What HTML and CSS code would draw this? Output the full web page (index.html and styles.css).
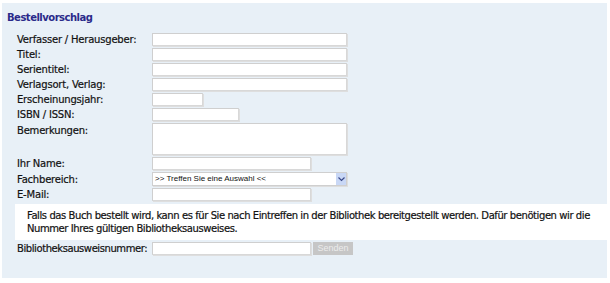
FILE: index.html
```html
<!DOCTYPE html>
<html lang="de">
<head>
<meta charset="utf-8">
<title>Bestellvorschlag</title>
<link rel="stylesheet" href="styles.css">
</head>
<body>
<div class="panel">
  <h1 class="title">Bestellvorschlag</h1>
  <form class="form">
    <div class="grid">
      <label class="lbl">Verfasser / Herausgeber:</label><input class="inp w-full" type="text">
      <label class="lbl">Titel:</label><input class="inp w-full" type="text">
      <label class="lbl">Serientitel:</label><input class="inp w-full" type="text">
      <label class="lbl">Verlagsort, Verlag:</label><input class="inp w-full" type="text">
      <label class="lbl">Erscheinungsjahr:</label><input class="inp w-year" type="text">
      <label class="lbl">ISBN / ISSN:</label><input class="inp w-isbn" type="text">
      <label class="lbl lbl-top">Bemerkungen:</label><textarea class="inp w-full area"></textarea>
      <label class="lbl">Ihr Name:</label><input class="inp w-mid" type="text">
      <label class="lbl">Fachbereich:</label>
      <div class="select w-full"><span class="select-text">&gt;&gt; Treffen Sie eine Auswahl &lt;&lt;</span><span class="select-btn"><svg width="7" height="5" viewBox="0 0 7 5"><path d="M0.5 0.5 L3.5 3.5 L6.5 0.5" fill="none" stroke="#3a4a8a" stroke-width="1.2"/></svg></span></div>
      <label class="lbl">E-Mail:</label><input class="inp w-mid" type="text">
    </div>
    <div class="note">Falls das Buch bestellt wird, kann es für Sie nach Eintreffen in der Bibliothek bereitgestellt werden. Dafür benötigen wir die Nummer Ihres gültigen Bibliotheksausweises.</div>
    <div class="grid">
      <label class="lbl lbl-tight">Bibliotheksausweisnummer:</label>
      <div class="row"><input class="inp w-mid" type="text"><button class="btn" type="button">Senden</button></div>
    </div>
  </form>
</div>
</body>
</html>
```
FILE: styles.css
```css
html, body {
  margin: 0;
  padding: 0;
  background: #ffffff;
}
body {
  font-family: "DejaVu Sans", Verdana, sans-serif;
  font-size: 10px;
  color: #111111;
}
.panel {
  margin: 3px 3px 0 2px;
  width: 605px;
  height: 275px;
  background: #e8f0f7;
  box-sizing: border-box;
  padding-top: 8px;
}
.title {
  margin: 0 0 0 5px;
  font-size: 10px;
  font-weight: bold;
  letter-spacing: -0.5px;
  line-height: 13px;
  color: #2a2a8a;
  height: 22px;
}
.form {
  margin: 0;
}
.grid {
  display: grid;
  grid-template-columns: 135px auto;
  row-gap: 2px;
  align-items: center;
  padding-left: 15px;
}
.lbl {
  line-height: 13px;
  white-space: nowrap;
  letter-spacing: -0.2px;
  -webkit-text-stroke: 0.2px #111;
}
.lbl-tight {
  letter-spacing: -0.42px;
}
.lbl-top {
  align-self: start;
  padding-top: 1px;
}
.inp {
  box-sizing: border-box;
  height: 13px;
  margin: 0;
  padding: 0 2px;
  border: 1px solid #cfcfcf;
  border-right-color: #d8d8d8;
  border-bottom-color: #d8d8d8;
  box-shadow: 1px 1px 0 #dedede;
  background: #fff;
  font: 9px "Liberation Sans", Arial, sans-serif;
  outline: none;
}
.w-full { width: 195px; }
.w-year { width: 51px; }
.w-isbn { width: 87px; }
.w-mid { width: 159px; }
.area {
  height: 32px;
  resize: none;
  display: block;
}
.select {
  position: relative;
  box-sizing: border-box;
  height: 14px;
  border: 1px solid #cfcfcf;
  box-shadow: 1px 1px 0 #dedede;
  background: #fff;
  font: 8px "Liberation Sans", Arial, sans-serif;
  color: #111;
  line-height: 12px;
  padding-left: 2px;
}
.select-btn {
  position: absolute;
  right: 0;
  top: 0;
  width: 10px;
  height: 12px;
  background: #c9d8f6;
  display: flex;
  align-items: center;
  justify-content: center;
}
.note {
  margin: 3px 0 2px 13px;
  background: #ffffff;
  padding: 5px 2px 5px 12px;
  line-height: 13px;
  height: 36px;
  box-sizing: border-box;
  letter-spacing: -0.42px;
  -webkit-text-stroke: 0.2px #111;
}
.row {
  display: flex;
  gap: 2px;
  align-items: center;
}
.btn {
  box-sizing: border-box;
  width: 40px;
  height: 13px;
  margin: 0;
  padding: 0;
  border: none;
  background: #c6c6c6;
  color: #ececec;
  font: 9px "Liberation Sans", Arial, sans-serif;
  line-height: 13px;
}
```
